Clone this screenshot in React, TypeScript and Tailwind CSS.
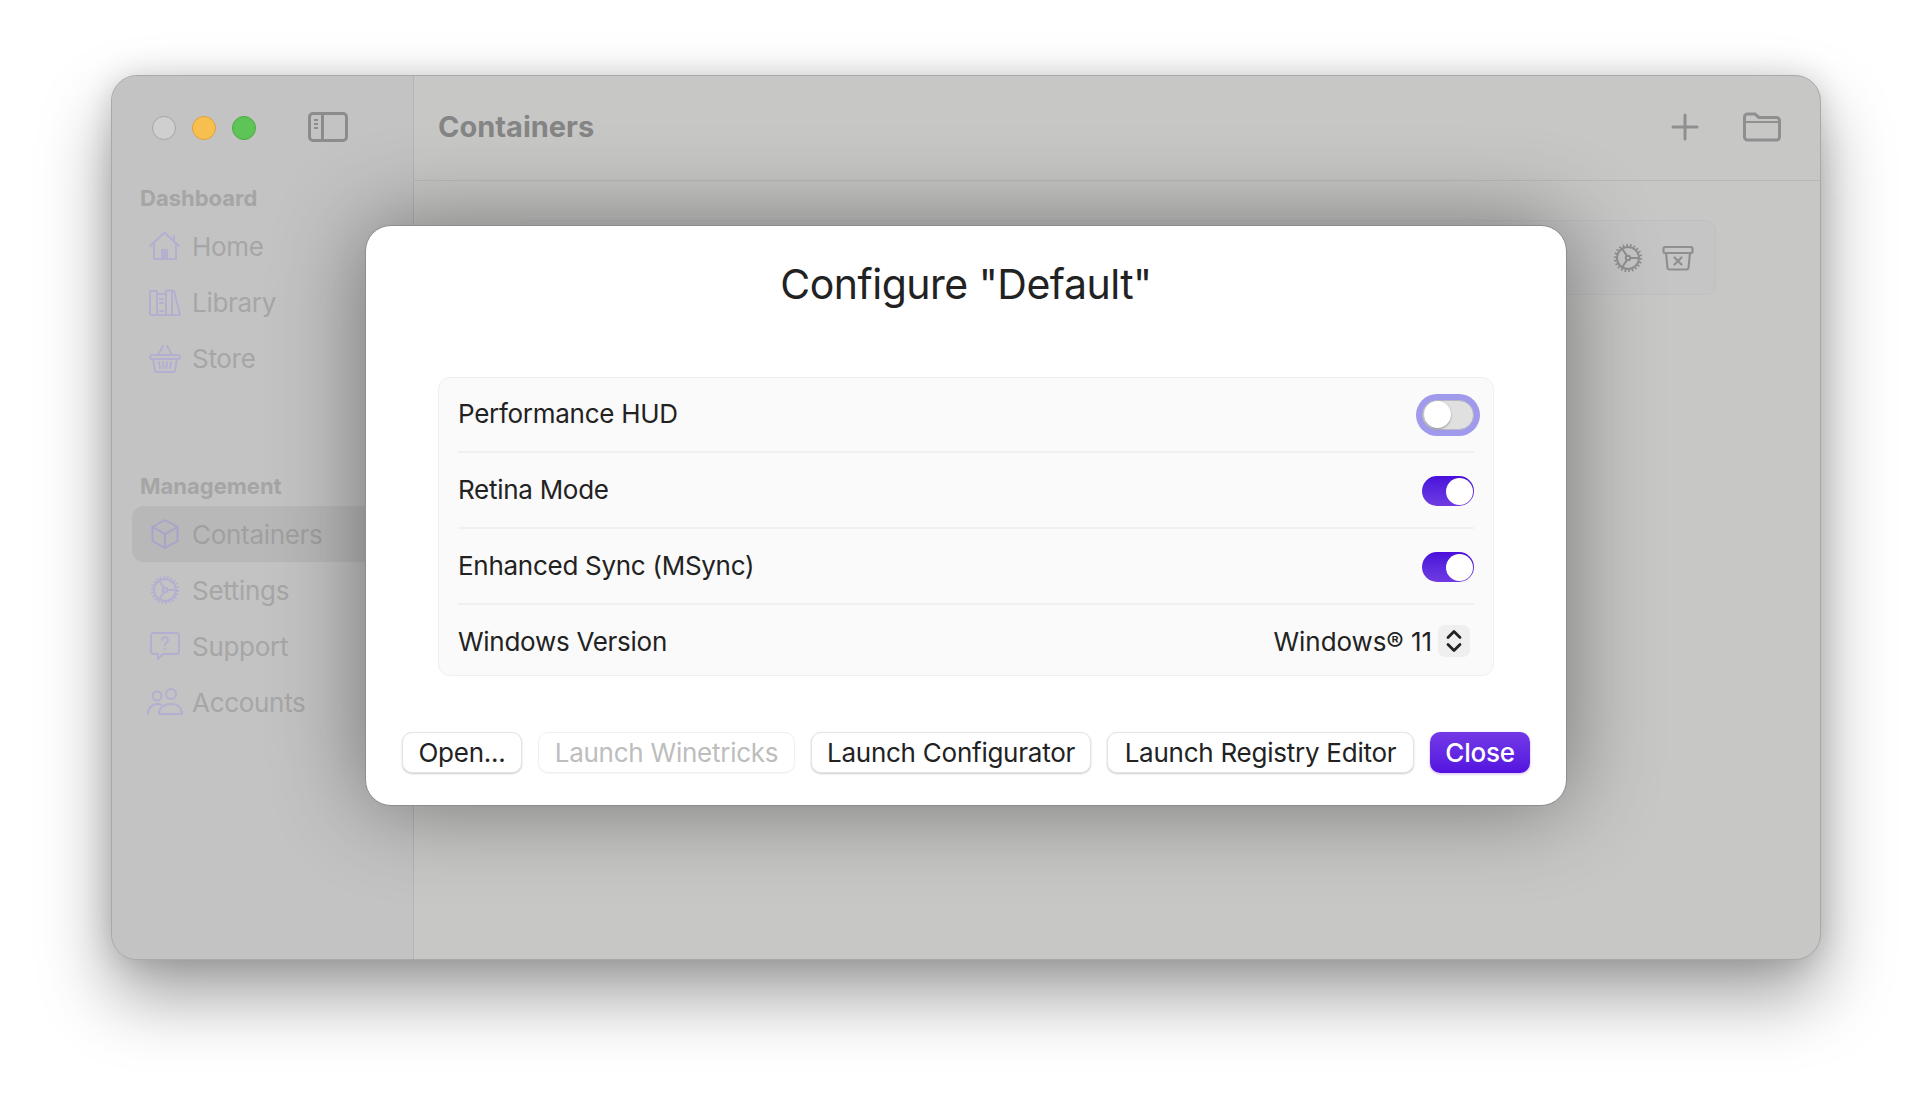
import React from "react";

const font = { fontFamily: "Inter, 'Liberation Sans', sans-serif" };

function Icon({ children, className = "" }: { children: React.ReactNode; className?: string }) {
  return (
    <svg viewBox="0 0 32 32" fill="none" stroke="currentColor" strokeWidth="2" strokeLinecap="round" strokeLinejoin="round" className={`w-8 h-8 ${className}`}>
      {children}
    </svg>
  );
}

const Gear = ({ className = "" }: { className?: string }) => (
  <Icon className={className}>
    <circle cx="16" cy="16" r="11" />
    <circle cx="16" cy="16" r="2.2" />
    <path d="M18 16h9M15 14 10 6.5M15 18l-5 7.5" />
    <circle cx="16" cy="16" r="13" strokeDasharray="1.6 2.1" strokeWidth="2.4" strokeLinecap="butt" />
  </Icon>
);

const icons: Record<string, React.ReactNode> = {
  Home: (
    <Icon>
      <path d="M1 16 15.500 2.500 30 16" />
      <path d="M25 6v6" />
      <path d="M5 14v15h22V14" />
      <rect x="12" y="19" width="7" height="10" fill="currentColor" stroke="none" />
    </Icon>
  ),
  Library: (
    <Icon>
      <rect x="1" y="5" width="7" height="24" rx="1" />
      <rect x="8" y="8" width="9" height="21" />
      <path d="M11 13h3M11 17h3M11 25h3" />
      <path d="M17 4.500h6V29h-6z" />
      <path d="M25 5 31 28.500" />
      <path d="M23 5h2M25 29h6" />
    </Icon>
  ),
  Store: (
    <Icon>
      <path d="M9 13 14 4M23 13 18 4" />
      <rect x="1" y="13" width="30" height="4" rx="2" />
      <path d="M4 17l2 12a2 2 0 0 0 2 1h16a2 2 0 0 0 2-1l2-12" />
      <path d="M10 20l1 6M14 20l.5 6M18 20l-.5 6M22 20l-1 6" />
    </Icon>
  ),
  Containers: (
    <Icon>
      <path d="M16 2 28.500 9v14L16 30 3.500 23V9z" />
      <path d="M3.500 9 16 16l12.500-7M16 16v14" />
    </Icon>
  ),
  Settings: <Gear />,
  Support: (
    <Icon>
      <path d="M5 3h22a3 3 0 0 1 3 3v15a3 3 0 0 1-3 3H14l-5 5v-5H5a3 3 0 0 1-3-3V6a3 3 0 0 1 3-3z" />
      <path d="M13 10a3 3 0 1 1 4.500 2.600c-1 .6-1.500 1.200-1.500 2.400" />
      <path d="M16 19v.2" />
    </Icon>
  ),
  Accounts: (
    <svg viewBox="0 0 36 32" fill="none" stroke="currentColor" strokeWidth="2" strokeLinecap="round" strokeLinejoin="round" className="w-9 h-8">
      <circle cx="10" cy="10" r="4.500" />
      <circle cx="24" cy="8" r="5" />
      <path d="M1 28c0-6 4-10 10-10 1.500 0 2.500.2 3.500.6" />
      <path d="M12 28c0-6 5-10 12-10s11 4 11 10z" />
    </svg>
  ),
};

function NavItem({ name, active = false }: { name: string; active?: boolean }) {
  return (
    <div className={`h-14 flex items-center pl-4 text-[26px] tracking-[-0.3px] rounded-l-xl ${active ? "bg-[#b8b8b8] text-[#a0a0a0]" : "text-[#a6a6a6]"}`}>
      <span className={`w-[45px] flex justify-center -ml-[6px] mr-[5px] ${active ? "text-[#aaa2cb]" : "text-[#b5aed0]"}`}>{icons[name]}</span>
      <span>{name}</span>
    </div>
  );
}

function Toggle({ on = false, focus = false }: { on?: boolean; focus?: boolean }) {
  if (on) {
    return (
      <div className="mt-[2px] w-[52px] h-[30px] rounded-full bg-gradient-to-b from-[#4a0cdb] to-[#6f3ae2] flex items-center justify-end pr-[1px]">
        <div className="w-[27px] h-[27px] rounded-full bg-white" />
      </div>
    );
  }
  return (
    <div className={`w-[52px] h-[30px] rounded-full bg-[#e0e0e0] border border-[#b9b9c4] flex items-center pl-[1px] ${focus ? "shadow-[0_0_0_6px_#9f9aec]" : ""}`}>
      <div className="w-[27px] h-[27px] rounded-full bg-white shadow-[0_1px_2px_rgba(0,0,0,0.35)]" />
    </div>
  );
}

function Row({ label, children, h, last = false }: { label: string; children: React.ReactNode; h: string; last?: boolean }) {
  return (
    <div className={`flex items-center justify-between ${h} ${last ? "" : "border-b-2 border-[#f0f0f0]"}`}>
      <span className={last ? "pt-[2px]" : "pb-[2px]"}>{label}</span>
      {children}
    </div>
  );
}

function Btn({ children, w, disabled = false }: { children: React.ReactNode; w: string; disabled?: boolean }) {
  return (
    <div
      className={`${w} h-[41px] rounded-[10px] bg-white flex items-center justify-center text-[26px] tracking-[-0.25px] border ${
        disabled
          ? "text-[#bdbdbd] border-[#f0f0f0] shadow-[0_1px_1px_rgba(0,0,0,0.04)]"
          : "text-[#222222] border-[#e4e4e4] shadow-[0_1px_2px_rgba(0,0,0,0.2)]"
      }`}
    >
      {children}
    </div>
  );
}

export default function App() {
  return (
    <div style={font} className="w-[1932px] h-[1108px] bg-white pt-[75px] pl-[111px] overflow-hidden">
      <div className="relative w-[1710px] h-[885px] rounded-[26px] bg-[#c7c7c6] border border-[#a9a9a9] shadow-[0_36px_70px_rgba(0,0,0,0.38),0_0_30px_rgba(0,0,0,0.14)] flex overflow-hidden">
        {/* Sidebar */}
        <aside className="w-[302px] shrink-0 h-full bg-[#c3c3c3] border-r border-[#b3b3b3] pl-[20px]">
          <div className="h-[104px] flex items-center pl-[20px]">
            <div className="w-6 h-6 rounded-full bg-[#cfcfcf] border border-[#a5a5a5]" />
            <div className="w-6 h-6 rounded-full bg-[#f7bf4f] border border-[#dca33b] ml-4" />
            <div className="w-6 h-6 rounded-full bg-[#5ec455] border border-[#4aa844] ml-4" />
            <svg viewBox="0 0 40 30" fill="none" stroke="#8c8c8c" strokeWidth="3" className="w-10 h-[30px] ml-[52px] mb-[2px]">
              <rect x="1.500" y="1.500" width="37" height="27" rx="3.500" />
              <path d="M14.500 2v26" />
              <path d="M6 8h4M6 12h4M6 16h4" strokeWidth="2" />
            </svg>
          </div>
          <div className="text-[22px] font-bold text-[#a5a5a5] pl-[8px] mt-[5px] leading-[26px]">Dashboard</div>
          <div className="mt-[7px]">
            <NavItem name="Home" />
            <NavItem name="Library" />
            <NavItem name="Store" />
          </div>
          <div className="text-[22px] font-bold text-[#a5a5a5] pl-[8px] mt-[87px] leading-[26px]">Management</div>
          <div className="mt-[7px]">
            <NavItem name="Containers" active />
            <NavItem name="Settings" />
            <NavItem name="Support" />
            <NavItem name="Accounts" />
          </div>
        </aside>

        {/* Main */}
        <main className="flex-1 min-w-0">
          <header className="h-[106px] border-b border-[#b9b9b9] flex items-center justify-between pl-[24px] pr-[39px] pb-[2px] -mt-[1px]">
            <span className="text-[29px] font-bold text-[#858585]">Containers</span>
            <div className="flex items-center gap-[44px] text-[#8f8f8f]">
              <svg viewBox="0 0 28 28" fill="none" stroke="currentColor" strokeWidth="3" strokeLinecap="round" className="w-7 h-7">
                <path d="M14 2v24M2 14h24" />
              </svg>
              <svg viewBox="0 0 38 30" fill="none" stroke="currentColor" strokeWidth="3" strokeLinejoin="round" className="w-[38px] h-[30px]">
                <path d="M1.500 5a3 3 0 0 1 3-3h7.500l4 3.500h17.500a3 3 0 0 1 3 3V25a3 3 0 0 1-3 3H4.500a3 3 0 0 1-3-3z" />
                <path d="M2 10h34" strokeWidth="2" />
              </svg>
            </div>
          </header>
          <div className="mt-[39px] mx-[104px] h-[75px] rounded-[10px] border border-[#c0c0c0] bg-[#c5c5c5] flex items-center justify-end pr-[21px] gap-[18px] text-[#8f8f8f]">
            <Gear />
            <svg viewBox="0 0 32 26" fill="none" stroke="currentColor" strokeWidth="2.200" strokeLinecap="round" strokeLinejoin="round" className="w-8 h-[26px]">
              <rect x="1.500" y="2" width="29" height="6" rx="1.500" />
              <path d="M4 8l1.500 15a2 2 0 0 0 2 1.500h17a2 2 0 0 0 2-1.500L28 8" />
              <path d="M12.500 12.500l7 7M19.500 12.500l-7 7" />
            </svg>
          </div>
        </main>

        {/* Dialog */}
        <div className="absolute left-[253px] top-[149px] w-[1202px] h-[581px] bg-white rounded-[26px] border border-[#8d8d8d] shadow-[0_0_90px_rgba(0,0,0,0.42)] text-[#222222] flex flex-col">
          <h1 className="text-[41px] leading-[52px] text-center mt-[32px] font-normal -tracking-[0.5px]">Configure "Default"</h1>
          <div className="mt-[67px] mx-[72px] h-[299px] rounded-[12px] bg-[#fafafa] border border-[#efefef] px-[19px] text-[26px] tracking-[-0.28px]">
            <Row label="Performance HUD" h="h-[75px]"><Toggle focus /></Row>
            <Row label="Retina Mode" h="h-[76px]"><Toggle on /></Row>
            <Row label="Enhanced Sync (MSync)" h="h-[76px]"><Toggle on /></Row>
            <Row label="Windows Version" h="h-[70px]" last>
              <div className="flex items-center">
                <span className="pt-[2px] tracking-[-0.05px]">Windows® 11</span>
                <div className="ml-[6px] mr-[4px] mt-[1px] w-[32px] h-[32px] rounded-[7px] bg-[#efefef] flex items-center justify-center">
                  <svg viewBox="0 0 16 24" fill="none" stroke="#222222" strokeWidth="2.800" strokeLinecap="round" strokeLinejoin="round" className="w-4 h-6">
                    <path d="M2 8.500 8 2.500l6 6M2 15.500l6 6 6-6" />
                  </svg>
                </div>
              </div>
            </Row>
          </div>
          <div className="mt-[56px] ml-[36px] flex gap-4">
            <Btn w="w-[120px]">Open...</Btn>
            <Btn w="w-[257px]" disabled>Launch Winetricks</Btn>
            <Btn w="w-[280px]">Launch Configurator</Btn>
            <Btn w="w-[307px]">Launch Registry Editor</Btn>
            <div className="w-[100px] h-[41px] rounded-[10px] bg-gradient-to-b from-[#7338e6] to-[#5511df] text-white font-medium flex items-center justify-center text-[26px] tracking-[-0.25px] shadow-[0_1px_3px_rgba(85,17,223,0.3)]">Close</div>
          </div>
        </div>
      </div>
    </div>
  );
}
